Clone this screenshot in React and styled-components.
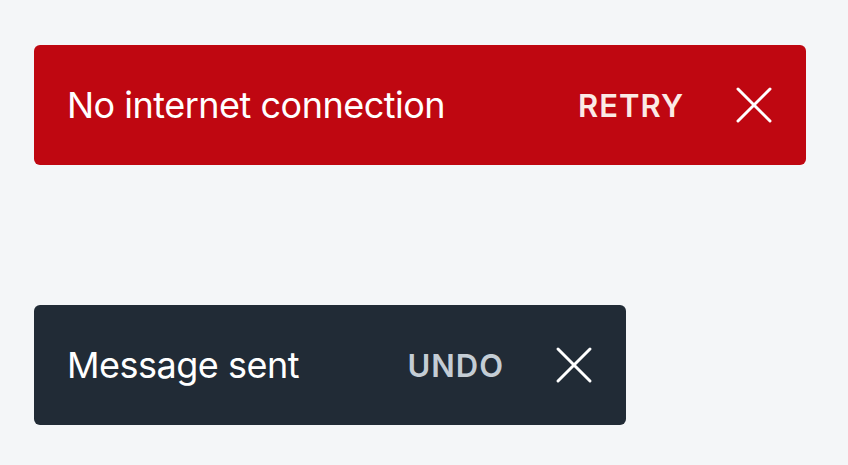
import styled, { createGlobalStyle } from "styled-components";

const GlobalStyle = createGlobalStyle`
  html, body {
    margin: 0;
    padding: 0;
    background-color: #f4f6f8;
    font-family: Inter, "Noto Sans", sans-serif;
  }
`;

const Page = styled.main`
  display: flex;
  flex-direction: column;
  align-items: flex-start;
  gap: 140px;
  padding: 45px 34px;
`;

const Snackbar = styled.div`
  display: flex;
  align-items: center;
  box-sizing: border-box;
  width: ${(props) => props.$width}px;
  height: 120px;
  padding: 0 32px 0 33px;
  border-radius: 6px;
  background-color: ${(props) => (props.$tone === "critical" ? "#bf0711" : "#212b36")};
  color: #ffffff;
`;

const Message = styled.span`
  flex: 1;
  font-size: 36px;
  font-weight: 400;
  letter-spacing: -0.5px;
`;

const Action = styled.button`
  border: none;
  background: transparent;
  padding: 0;
  margin-right: 50px;
  font-family: inherit;
  font-size: 31px;
  font-weight: 600;
  letter-spacing: 1px;
  text-transform: uppercase;
  color: ${(props) => (props.$tone === "critical" ? "#fbeae5" : "#c4cdd5")};
  cursor: pointer;
`;

const Close = styled.button`
  display: flex;
  align-items: center;
  justify-content: center;
  width: 40px;
  height: 40px;
  border: none;
  background: transparent;
  padding: 0;
  cursor: pointer;
  > svg {
    display: block;
  }
`;

const CloseIcon = () => (
  <svg width="40" height="40" viewBox="0 0 40 40" fill="none">
    <path
      d="M4 4L36 36M36 4L4 36"
      stroke="#ffffff"
      strokeWidth="3"
      strokeLinecap="round"
    />
  </svg>
);

const toasts = [
  { id: 1, tone: "critical", width: 772, text: "No internet connection", action: "Retry" },
  { id: 2, tone: "default", width: 592, text: "Message sent", action: "Undo" },
];

const App = () => {
  return (
    <>
      <GlobalStyle />
      <Page>
        {toasts.map((toast) => (
          <Snackbar key={toast.id} $tone={toast.tone} $width={toast.width}>
            <Message>{toast.text}</Message>
            <Action $tone={toast.tone}>{toast.action}</Action>
            <Close aria-label="Dismiss">
              <CloseIcon />
            </Close>
          </Snackbar>
        ))}
      </Page>
    </>
  );
};

export default App;
